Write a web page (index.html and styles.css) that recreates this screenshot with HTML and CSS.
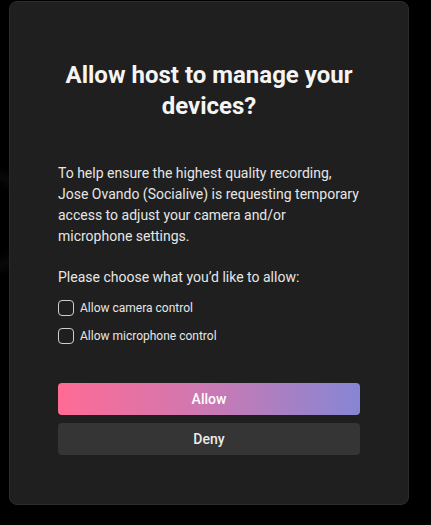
FILE: index.html
```html
<!DOCTYPE html>
<html>
<head>
<meta charset="utf-8">
<link rel="stylesheet" href="styles.css">
</head>
<body>
<div class="bg-glow"></div>
<div class="card">
  <h1 class="title">Allow host to manage your devices?</h1>
  <p class="desc">To help ensure the highest quality recording, Jose Ovando (Socialive) is requesting temporary access to adjust your camera and/or microphone settings.</p>
  <p class="prompt">Please choose what you’d like to allow:</p>
  <div class="options">
    <label class="option"><span class="box"></span><span>Allow camera control</span></label>
    <label class="option"><span class="box"></span><span>Allow microphone control</span></label>
  </div>
  <div class="actions">
    <button class="btn btn-allow">Allow</button>
    <button class="btn btn-deny">Deny</button>
  </div>
</div>
</body>
</html>
```
FILE: styles.css
```css
html, body {
  margin: 0;
  padding: 0;
  background: #000;
  height: 100%;
}
body {
  font-family: Roboto, "Liberation Sans", sans-serif;
  padding: 1px 0 0 9px;
  box-sizing: border-box;
  position: relative;
  overflow: hidden;
}
.bg-glow {
  position: absolute;
  left: -60px;
  top: 170px;
  width: 80px;
  height: 90px;
  border-radius: 50%;
  border: 6px solid rgba(255,255,255,0.06);
  filter: blur(4px);
}
.card {
  position: relative;
  width: 400px;
  box-sizing: border-box;
  background: #1f1f1f;
  border: 1px solid #2c2c2c;
  border-radius: 8px;
  padding: 58px 48px 49px 48px;
  color: #e8e8e8;
}
.title {
  margin: 0;
  font-size: 24px;
  font-weight: 700;
  line-height: 31px;
  text-align: center;
  color: #f4f4f4;
  padding: 0 4px;
}
.desc {
  margin: 41px 0 0;
  font-size: 14px;
  line-height: 21px;
  color: #e6e6e6;
}
.prompt {
  margin: 20px 0 0;
  font-size: 14px;
  line-height: 21px;
  color: #e6e6e6;
}
.options {
  margin-top: 8px;
  display: flex;
  flex-direction: column;
  gap: 4px;
}
.option {
  display: flex;
  align-items: center;
  gap: 6px;
  height: 24px;
  font-size: 12px;
  color: #e6e6e6;
}
.box {
  width: 16px;
  height: 16px;
  box-sizing: border-box;
  border: 1.5px solid #cfcfcf;
  border-radius: 4px;
  flex: none;
}
.actions {
  margin-top: 35px;
  display: flex;
  flex-direction: column;
  gap: 8px;
}
.btn {
  height: 32px;
  border: none;
  border-radius: 4px;
  font-family: Roboto, "Liberation Sans", sans-serif;
  font-size: 14px;
  font-weight: 500;
  color: #fff;
  cursor: pointer;
}
.btn-allow {
  background: linear-gradient(90deg, #ff6b95 0%, #d178b0 45%, #8686d4 100%);
}
.btn-deny {
  background: #353535;
  color: #ececec;
}
```
